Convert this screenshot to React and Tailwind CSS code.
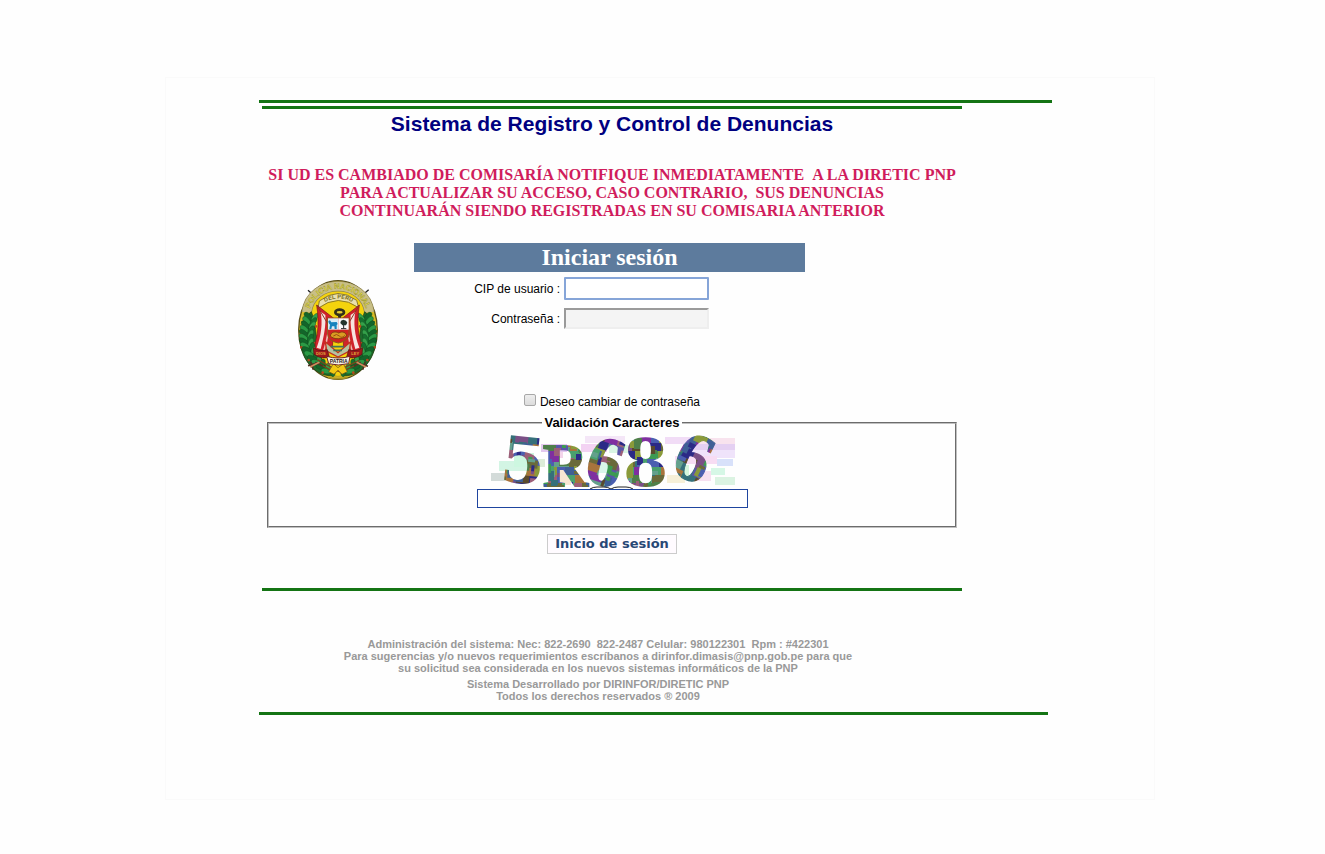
import React from "react";

const LEAVES = Array.from({ length: 14 }, (_, i) => {
  const t = i / 13;
  return { x: 62 + 60 * t * t * t - 16 * Math.sin(t * Math.PI) + 6 * (1 - t), y: 138 + t * 164 };
});

function Wreath() {
  return (
    <g>
      <path d="M78 124 C46 148 36 200 50 242 C64 286 102 320 144 316 C126 292 104 266 98 234 C92 198 92 158 78 124Z" fill="#1f6b2c" stroke="#1c3c12" strokeWidth="2" />
      {LEAVES.map((l, i) => (
        <g key={i} stroke="#0e4419" strokeWidth="1">
          <ellipse cx={l.x} cy={l.y} rx="15" ry="8" fill={i % 2 ? "#2b9a45" : "#13652a"} transform={`rotate(${50 - i * 3} ${l.x} ${l.y})`} />
          <ellipse cx={l.x + 21} cy={l.y + 3} rx="14" ry="7" fill={i % 2 ? "#15702f" : "#34a04a"} transform={`rotate(${-50 - i * 3} ${l.x + 21} ${l.y + 3})`} />
          {i % 3 === 1 && <circle cx={l.x - 10} cy={l.y + 5} r="4" fill="#b8481c" stroke="none" />}
          {i % 4 === 2 && <circle cx={l.x + 32} cy={l.y + 5} r="4" fill="#b8481c" stroke="none" />}
        </g>
      ))}
    </g>
  );
}

function Flags() {
  return (
    <g>
      <path d="M94 104 L148 146 L140 242 L92 242 C86 226 92 208 96 190 C100 160 98 130 94 104Z" fill="#d0222b" stroke="#7a1418" strokeWidth="2" />
      <path d="M106 124 L120 134 C122 166 116 196 106 236 L94 232 C108 194 112 158 106 124Z" fill="#f6e4e0" />
      <path d="M130 146 C132 182 126 208 116 240" fill="none" stroke="#efb9b0" strokeWidth="5" />
      <path d="M94 104 L154 206" stroke="#8a3a22" strokeWidth="3" />
    </g>
  );
}

function Emblem() {
  return (
    <svg viewBox="38 29 240 300" className="h-[100px] w-[80px]" role="img" aria-label="Policía Nacional del Perú">
      <defs>
        <path id="arc-top" d="M68 140 C82 27 234 27 248 140" />
        <path id="arc-ribbon" d="M108 101 Q158 69 212 101" />
      </defs>
      <path d="M80 70 L68 60 M236 70 L250 58" stroke="#222" strokeWidth="4" />
      <ellipse cx="158" cy="179" rx="118" ry="148" fill="#d9bd28" stroke="#5b5118" strokeWidth="4" />
      <ellipse cx="158" cy="181" rx="106" ry="137" fill="#f4d30d" stroke="#a88f20" strokeWidth="2" />
      <path d="M64 126 C76 22 240 22 252 126" fill="none" stroke="#8f8450" strokeWidth="31" />
      <path d="M64 126 C76 22 240 22 252 126" fill="none" stroke="#c9bf86" strokeWidth="27" />
      <text fontFamily="Liberation Sans" fontSize="23" fontWeight="bold" fill="#f4ec4a" stroke="#7d7730" strokeWidth="1">
        <textPath href="#arc-top" startOffset="50%" textAnchor="middle">POLICIA NACIONAL</textPath>
      </text>
      <path d="M98 114 Q158 68 220 112 L214 90 Q158 48 102 92Z" fill="#e9dfae" stroke="#8c7a28" strokeWidth="3" />
      <text fontFamily="Liberation Sans" fontSize="17" fontWeight="bold" fill="#766b18">
        <textPath href="#arc-ribbon" startOffset="50%" textAnchor="middle">DEL PERU</textPath>
      </text>
      <Wreath />
      <g transform="translate(316 0) scale(-1 1)"><Wreath /></g>
      <Flags />
      <g transform="translate(316 0) scale(-1 1)"><Flags /></g>
      <ellipse cx="163" cy="126" rx="13" ry="8" fill="#e7cf3a" stroke="#33301a" strokeWidth="8" />
      <path d="M157 130 L169 130 L167 144 L159 144Z" fill="#33301a" />
      <path d="M127 143 H191 V192 Q190 212 159 218 Q128 212 127 192Z" fill="#cf2322" stroke="#8a5b1a" strokeWidth="3" />
      <rect x="128" y="144" width="31" height="34" fill="#d9edf5" />
      <path d="M129 152 L134 150 L138 156 L154 155 L157 161 L154 164 L154 176 L148 176 L147 168 L140 168 L138 176 L132 176 L134 163 L130 158Z" fill="#1683bd" />
      <rect x="159" y="144" width="31" height="34" fill="#fafafa" />
      <path d="M175 174 V161 M167 175 H183" stroke="#222" strokeWidth="3" />
      <path d="M167 151 L174 148 L182 151 L186 157 L182 165 L171 165 L165 158Z" fill="#24352c" />
      <path d="M135 197 C137 184 151 182 160 188 C172 181 183 187 184 197 C172 207 145 209 135 197Z" fill="#da9c22" stroke="#84400e" strokeWidth="3" />
      <path d="M144 197 Q154 188 162 197 T178 195" fill="none" stroke="#9a4e12" strokeWidth="3" />
      <path d="M120 214 L158 247 L196 214 L192 242 L158 260 L124 242Z" fill="#b6c3a0" stroke="#c33220" strokeWidth="4" />
      <path d="M136 229 L176 229 M144 240 L170 240" stroke="#42725a" strokeWidth="5" />
      <path d="M84 232 Q104 246 126 238 L132 260 Q106 268 86 252Z" fill="#9c171c" stroke="#4f1210" strokeWidth="2" />
      <path d="M232 232 Q212 246 190 238 L184 260 Q210 268 230 252Z" fill="#9c171c" stroke="#4f1210" strokeWidth="2" />
      <g fontFamily="Liberation Sans" fontSize="12" fontWeight="bold">
        <text x="92" y="253" fill="#e2a93a">DIOS</text>
        <text x="198" y="253" fill="#e2a93a">LEY</text>
      </g>
      <path d="M94 276 L147 306 L222 270 M96 268 L166 306 L224 278" fill="none" stroke="#77451b" strokeWidth="4" />
      <path d="M144 280 L158 292 L174 280 L186 304 L170 312 L158 300 L146 312 L130 304Z" fill="#f2c913" stroke="#654915" strokeWidth="2" />
      <path d="M124 258 Q158 268 194 258 L190 280 Q158 288 130 280Z" fill="#f7f3e6" stroke="#71231d" strokeWidth="3" />
      <text x="160" y="278" textAnchor="middle" fontFamily="Liberation Sans" fontSize="15" fontWeight="bold" fill="#2b2020">PATRIA</text>
      <path d="M68 286 L92 280 M76 274 L84 298 M90 276 L112 288 M224 280 L248 288 M240 274 L232 298 M226 276 L206 288" stroke="#4d3322" strokeWidth="5" />
      <path d="M74 290 L102 276 M242 290 L214 276" stroke="#d08a5c" strokeWidth="5" />
      <path d="M128 321 Q158 329 186 321" fill="none" stroke="#a99424" strokeWidth="5" />
    </svg>
  );
}

const INKS = [
  "#5a55a8", "#2b2a86", "#64a08c", "#7a4f86", "#4f7f4a", "#8a9a3a", "#3f5f96", "#9c5f78",
  "#3c9a52", "#5a4a2c", "#a8743c", "#35707a", "#7f2fa0", "#4aa06e", "#6a6a3a", "#4b5fb0",
];

function mosaic() {
  const cells = [];
  let seed = 97;
  const next = (n) => {
    seed = (seed * 1103515245 + 12345) % 2147483648;
    return Math.floor((seed / 2147483648) * n);
  };
  for (let y = 0; y < 60; y += 8) {
    let x = 0;
    while (x < 246) {
      const w = 8 + next(9);
      cells.push({ x, y, w: w + 1, h: 9, fill: INKS[next(INKS.length)] });
      x += w;
    }
  }
  for (let i = 0; i < 170; i += 1) {
    cells.push({ x: next(242), y: next(54), w: 3 + next(8), h: 3 + next(9), fill: INKS[next(INKS.length)] });
  }
  return cells;
}

const CELLS = mosaic();

const TINTS = [
  [10, 26, 32, 10, "#d3f5e4"], [2, 38, 14, 8, "#d3dbd9"], [25, 18, 20, 14, "#cdf7e0"], [52, 9, 26, 8, "#e3c8ee"],
  [60, 17, 14, 6, "#f3d5ea"], [42, 24, 14, 8, "#dcecd8"], [62, 34, 20, 16, "#f8e6d2"], [92, 9, 26, 8, "#f3d3f3"],
  [96, 1, 40, 7, "#f4e6f7"], [120, 10, 22, 8, "#d9f5e4"], [104, 26, 24, 12, "#d8f7ea"], [176, 2, 34, 7, "#f1dcf6"],
  [194, 9, 52, 6, "#e4d0f2"], [200, 15, 46, 8, "#efe3fa"], [206, 3, 40, 6, "#f8e3ee"], [186, 21, 42, 8, "#f7dcf3"],
  [228, 24, 16, 7, "#d8e1fa"], [222, 33, 14, 7, "#d6f7e6"], [204, 36, 18, 10, "#f7e0f0"], [226, 42, 20, 8, "#dbf3e2"],
  [190, 30, 10, 12, "#d5f6dc"], [178, 40, 18, 8, "#f6f0d8"],
];

function Captcha() {
  return (
    <svg viewBox="0 0 246 54" className="block h-[54px] w-[246px] overflow-visible" role="img" aria-label="5R686">
      <defs>
        <pattern id="ink" width="246" height="60" patternUnits="userSpaceOnUse">
          {CELLS.map((c, i) => (
            <rect key={i} x={c.x} y={c.y} width={c.w} height={c.h} fill={c.fill} />
          ))}
        </pattern>
      </defs>
      {TINTS.map(([x, y, w, h, fill], i) => (
        <rect key={i} x={x} y={y} width={w} height={h} fill={fill} />
      ))}
      <g fill="url(#ink)" fontWeight="bold">
        <text x="12" y="48" fontSize="64" fontFamily="DejaVu Serif" transform="rotate(6 32 26)">5</text>
        <text x="54" y="51" fontSize="62" fontFamily="Liberation Serif" stroke="url(#ink)" strokeWidth="2">R</text>
        <text x="98" y="50" fontSize="70" fontFamily="Liberation Serif" stroke="url(#ink)" strokeWidth="2" transform="rotate(18 116 30)">6</text>
        <text x="134" y="51" fontSize="65" fontFamily="DejaVu Serif">8</text>
        <text x="187" y="46" fontSize="70" fontFamily="Liberation Serif" stroke="url(#ink)" strokeWidth="1" transform="rotate(26 206 24)">6</text>
      </g>
      <path d="M101 54 Q104 52 108 52 H115 Q119 52 122 54 Q125 52 129 52 H137 Q141 52 144 54" fill="none" stroke="#222" />
    </svg>
  );
}

const Rule = ({ className = "" }) => <hr className={`h-[3px] border-0 bg-[#147414] ${className}`} />;

export default function App() {
  return (
    <div className="min-h-screen bg-[#fefefe] pt-[77px] pr-[170px] pb-[54px] pl-[165px] font-['Liberation_Sans',Arial,sans-serif] text-black">
      <div className="border border-[#fafafa] pt-[22px] pr-[102px] pb-[84px] pl-[93px]">
        <Rule />
        <main className="mt-[3px] ml-[3px] max-w-[700px]">
          <Rule />
          <h1 className="mt-[3px] text-center text-[21px] leading-6 font-bold text-[#000080]">
            Sistema de Registro y Control de Denuncias
          </h1>
          <p className="mt-[30px] text-center font-['Liberation_Serif','Times_New_Roman',serif] text-[16px] leading-[18px] font-bold text-[#d01c5c]">
            SI UD ES CAMBIADO DE COMISARÍA NOTIFIQUE INMEDIATAMENTE &nbsp;A LA DIRETIC PNP<br />
            PARA ACTUALIZAR SU ACCESO, CASO CONTRARIO, &nbsp;SUS DENUNCIAS<br />
            CONTINUARÁN SIENDO REGISTRADAS EN SU COMISARIA ANTERIOR
          </p>

          <form className="mt-[23px]" onSubmit={(e) => e.preventDefault()}>
            <div className="flex">
              <div className="flex w-[152px] justify-center pt-[37px]">
                <Emblem />
              </div>
              <div className="w-[391px]">
                <h2 className="bg-[#5d7b9d] text-center font-['Liberation_Serif','Times_New_Roman',serif] text-[24px] leading-[29px] font-bold text-white">
                  Iniciar sesión
                </h2>
                <div className="mt-[5px] grid grid-cols-[146px_145px] items-center gap-x-1 gap-y-2 text-[12px]">
                  <label htmlFor="cip" className="text-right">CIP de usuario :</label>
                  <input id="cip" type="text" className="h-[23px] w-full rounded-[1px] border-2 border-[#86a5d8] bg-white px-1 outline-none" />
                  <label htmlFor="clave" className="text-right">Contraseña :</label>
                  <input id="clave" type="password" className="h-[21px] w-full border-2 border-t-[#9a9a9a] border-r-[#eeeeee] border-b-[#eeeeee] border-l-[#9a9a9a] bg-[#f4f4f4] px-1 outline-none" />
                </div>
              </div>
            </div>

            <div className="mt-[14px] flex items-center justify-center gap-1 text-[12px] leading-4">
              <input
                id="cambiar"
                type="checkbox"
                className="mb-1 size-3 appearance-none rounded-[2px] border border-[#a8a8a8] bg-linear-to-b from-[#eeeeee] to-[#dcdcdc] checked:bg-[#5d7b9d]"
              />
              <label htmlFor="cambiar">Deseo cambiar de contraseña</label>
            </div>

            <fieldset className="mx-[5px] mt-[5px] h-[113px] border-2 border-[#c0c0c0] [border-style:groove]">
              <legend className="mx-auto px-[2px] text-[13px] leading-4 font-bold">Validación Caracteres</legend>
              <div className="flex flex-col items-center pt-1">
                <Captcha />
                <input
                  aria-label="Caracteres de validación"
                  type="text"
                  className="h-[19px] w-[271px] border border-solid border-[#1f459f] bg-white px-1 text-[12px] outline-none"
                />
              </div>
            </fieldset>

            <div className="mt-[6px] flex justify-center">
              <button type="submit" className="h-5 border border-[#cccccc] bg-[#fffbff] px-[7px] font-['DejaVu_Sans',Verdana,sans-serif] text-[13px] leading-4 font-bold text-[#284775]">
                Inicio de sesión
              </button>
            </div>
          </form>
          <Rule className="mt-[34px]" />
        </main>

        <footer className="mr-1">
          <div className="mt-[47px] ml-[3px] max-w-[672px] text-center text-[11px] leading-3 font-bold text-[#999999]">
            <p>Administración del sistema: Nec: 822-2690 &nbsp;822-2487 Celular: 980122301 &nbsp;Rpm : #422301</p>
            <p>Para sugerencias y/o nuevos requerimientos escríbanos a dirinfor.dimasis@pnp.gob.pe para que</p>
            <p>su solicitud sea considerada en los nuevos sistemas informáticos de la PNP</p>
            <p className="mt-1">Sistema Desarrollado por DIRINFOR/DIRETIC PNP</p>
            <p>Todos los derechos reservados ® 2009</p>
          </div>
          <Rule className="mt-[10px]" />
        </footer>
      </div>
    </div>
  );
}
